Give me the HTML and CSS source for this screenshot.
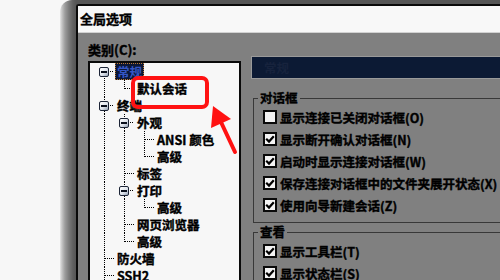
FILE: index.html
```html
<!DOCTYPE html>
<html lang="zh-CN">
<head>
<meta charset="utf-8">
<title>全局选项</title>
<link rel="stylesheet" href="styles.css">
</head>
<body>
<div class="frame">
  <div class="win">
    <div class="titlebar">全局选项</div>
    <div class="content">
      <div class="left">
        <div class="cat-label">类别(C):</div>
        <div class="tree">
          <div class="node"><span class="c exp first"><span class="pm"><span class="minus"></span></span></span><span class="lbl sel">常规</span></div>
          <div class="node"><span class="c pipe"></span><span class="c elbow"></span><span class="lbl">默认会话</span></div>
          <div class="node"><span class="c exp mid"><span class="pm"><span class="minus"></span></span></span><span class="lbl">终端</span></div>
          <div class="node"><span class="c pipe"></span><span class="c exp mid"><span class="pm"><span class="minus"></span></span></span><span class="lbl">外观</span></div>
          <div class="node"><span class="c pipe"></span><span class="c pipe"></span><span class="c tee"></span><span class="lbl">ANSI 颜色</span></div>
          <div class="node"><span class="c pipe"></span><span class="c pipe"></span><span class="c elbow"></span><span class="lbl">高级</span></div>
          <div class="node"><span class="c pipe"></span><span class="c tee"></span><span class="lbl">标签</span></div>
          <div class="node"><span class="c pipe"></span><span class="c exp mid"><span class="pm"><span class="minus"></span></span></span><span class="lbl">打印</span></div>
          <div class="node"><span class="c pipe"></span><span class="c pipe"></span><span class="c elbow"></span><span class="lbl">高级</span></div>
          <div class="node"><span class="c pipe"></span><span class="c tee"></span><span class="lbl">网页浏览器</span></div>
          <div class="node"><span class="c pipe"></span><span class="c elbow"></span><span class="lbl">高级</span></div>
          <div class="node"><span class="c tee"></span><span class="lbl">防火墙</span></div>
          <div class="node"><span class="c tee"></span><span class="lbl">SSH2</span></div>
        </div>
      </div>
      <div class="right">
        <div class="panel-head">常规</div>
        <fieldset class="group">
          <legend>对话框</legend>
          <div class="chk"><span class="box"></span>显示连接已关闭对话框(O)</div>
          <div class="chk"><span class="box"><svg viewBox="0 0 10 10" width="10" height="10"><path d="M1.2 4.8 L4 7.6 L8.8 2.2" fill="none" stroke="#000" stroke-width="2.2"/></svg></span>显示断开确认对话框(N)</div>
          <div class="chk"><span class="box"><svg viewBox="0 0 10 10" width="10" height="10"><path d="M1.2 4.8 L4 7.6 L8.8 2.2" fill="none" stroke="#000" stroke-width="2.2"/></svg></span>启动时显示连接对话框(W)</div>
          <div class="chk"><span class="box"><svg viewBox="0 0 10 10" width="10" height="10"><path d="M1.2 4.8 L4 7.6 L8.8 2.2" fill="none" stroke="#000" stroke-width="2.2"/></svg></span>保存连接对话框中的文件夹展开状态(X)</div>
          <div class="chk"><span class="box"><svg viewBox="0 0 10 10" width="10" height="10"><path d="M1.2 4.8 L4 7.6 L8.8 2.2" fill="none" stroke="#000" stroke-width="2.2"/></svg></span>使用向导新建会话(Z)</div>
        </fieldset>
        <fieldset class="group second">
          <legend>查看</legend>
          <div class="chk"><span class="box"><svg viewBox="0 0 10 10" width="10" height="10"><path d="M1.2 4.8 L4 7.6 L8.8 2.2" fill="none" stroke="#000" stroke-width="2.2"/></svg></span>显示工具栏(T)</div>
          <div class="chk"><span class="box"><svg viewBox="0 0 10 10" width="10" height="10"><path d="M1.2 4.8 L4 7.6 L8.8 2.2" fill="none" stroke="#000" stroke-width="2.2"/></svg></span>显示状态栏(S)</div>
        </fieldset>
      </div>
    </div>
  </div>
</div>
<svg class="annot" width="500" height="280" viewBox="0 0 500 280">
  <rect x="133" y="78" width="74" height="29" rx="5" fill="none" stroke="#ff1212" stroke-width="4"/>
  <polygon points="213,106 211,128 231,119" fill="#ff1212"/>
  <line x1="220" y1="120" x2="235" y2="152" stroke="#ff1212" stroke-width="4" stroke-linecap="round"/>
</svg>
</body>
</html>
```
FILE: styles.css
```css
html, body {
  margin: 0;
  width: 500px;
  height: 280px;
  overflow: hidden;
  background: #f7f7f7;
  font-family: "Noto Sans CJK SC", "Noto Sans", sans-serif;
  color: #000;
}

.frame {
  margin-left: 60px;
  width: 500px;
  height: 280px;
  box-sizing: border-box;
  padding: 4px 0 0 16px;
  border-top-left-radius: 12px;
  background: linear-gradient(to right, #e6e6e6 0, #c4c4c4 2px, #9c9c9c 5px, #7a7a7a 9px, #606060 13px, #565656 16px);
}

.win {
  height: 100%;
  box-sizing: border-box;
  border-left: 2px solid #0a0a0a;
  border-top: 2px solid #0a0a0a;
  border-top-left-radius: 3px;
  background: #808080;
}

.titlebar {
  height: 26px;
  line-height: 26px;
  padding-left: 2px;
  background: #f8f8f8;
  border-bottom: 1px solid #d2d2d2;
  font-size: 13px;
  font-weight: 700;
  -webkit-text-stroke: 0.4px #000;
}

.content {
  display: flex;
  gap: 10px;
  padding: 9px 0 0 10px;
}

.left {
  width: 153px;
  flex: none;
}

.cat-label {
  height: 16px;
  line-height: 16px;
  margin-bottom: 3px;
  font-size: 13px;
  font-weight: 700;
  -webkit-text-stroke: 0.4px #000;
}

.tree {
  height: 240px;
  box-sizing: border-box;
  border: 2px solid #0a0a0a;
  border-bottom: none;
  padding-left: 4px;
  background: #f7f7f7;
}

.node {
  display: flex;
  align-items: center;
  height: 17px;
}

.c {
  width: 20px;
  height: 17px;
  flex: none;
  box-sizing: border-box;
  display: flex;
  align-items: center;
  background-repeat: no-repeat;
}

.pipe {
  background-image: repeating-linear-gradient(to bottom, #000 0 1px, transparent 1px 2px);
  background-position: 10px 0;
  background-size: 1px 17px;
}

.tee {
  background-image:
    repeating-linear-gradient(to bottom, #000 0 1px, transparent 1px 2px),
    repeating-linear-gradient(to right, #000 0 1px, transparent 1px 2px);
  background-position: 10px 0, 11px 8px;
  background-size: 1px 17px, 9px 1px;
}

.elbow {
  background-image:
    repeating-linear-gradient(to bottom, #000 0 1px, transparent 1px 2px),
    repeating-linear-gradient(to right, #000 0 1px, transparent 1px 2px);
  background-position: 10px 0, 11px 8px;
  background-size: 1px 9px, 9px 1px;
}

.exp {
  padding-left: 5px;
  background-image:
    repeating-linear-gradient(to bottom, #000 0 1px, transparent 1px 2px),
    repeating-linear-gradient(to right, #000 0 1px, transparent 1px 2px);
  background-position: 10px 0, 14px 8px;
  background-size: 1px 17px, 6px 1px;
}

.exp.first {
  background-position: 10px 9px, 14px 8px;
  background-size: 1px 8px, 6px 1px;
}

.pm {
  width: 10px;
  height: 10px;
  box-sizing: border-box;
  border: 1px solid #1c2436;
  border-radius: 2px;
  background: linear-gradient(135deg, #ffffff 0%, #dfe4ec 55%, #9aa6b8 100%);
  display: flex;
  align-items: center;
  justify-content: center;
}

.minus {
  width: 6px;
  height: 2px;
  background: #0a0f1c;
}

.lbl {
  margin-left: 1px;
  padding: 0 2px;
  height: 17px;
  line-height: 17px;
  font-size: 12.5px;
  font-weight: 700;
  white-space: nowrap;
  -webkit-text-stroke: 0.4px #000;
}

.lbl.sel {
  background: #0b1736;
  color: #3456c6;
  -webkit-text-stroke: 0;
  outline: 1px dotted #c07a30;
  outline-offset: -1px;
}

.right {
  flex: 1;
  min-width: 0;
  padding-top: 14px;
}

.panel-head {
  height: 21px;
  line-height: 21px;
  border: 1px solid #9a9a9a;
  background: #0c1a34;
  color: #17233d;
  padding-left: 12px;
  font-size: 12.5px;
  font-weight: 700;
}

.group {
  margin: 11px 0 0 2px;
  padding: 0 0 6px 9px;
  border: 1px solid #383838;
  min-width: 0;
}

.group.second {
  margin-top: 1px;
  padding-bottom: 0;
}

.group legend {
  margin-left: -5px;
  padding: 0 2px;
  line-height: 16px;
  font-size: 12.5px;
  font-weight: 700;
  -webkit-text-stroke: 0.4px #000;
}

.chk {
  display: flex;
  align-items: center;
  gap: 3px;
  height: 22px;
  font-size: 12.5px;
  font-weight: 700;
  white-space: nowrap;
  -webkit-text-stroke: 0.4px #000;
}

.box {
  width: 14px;
  height: 14px;
  flex: none;
  box-sizing: border-box;
  border: 2px solid #0a0a0a;
  background: #f4f4f4;
  display: flex;
  align-items: center;
  justify-content: center;
}

.annot {
  position: absolute;
  left: 0;
  top: 0;
  pointer-events: none;
}
```
